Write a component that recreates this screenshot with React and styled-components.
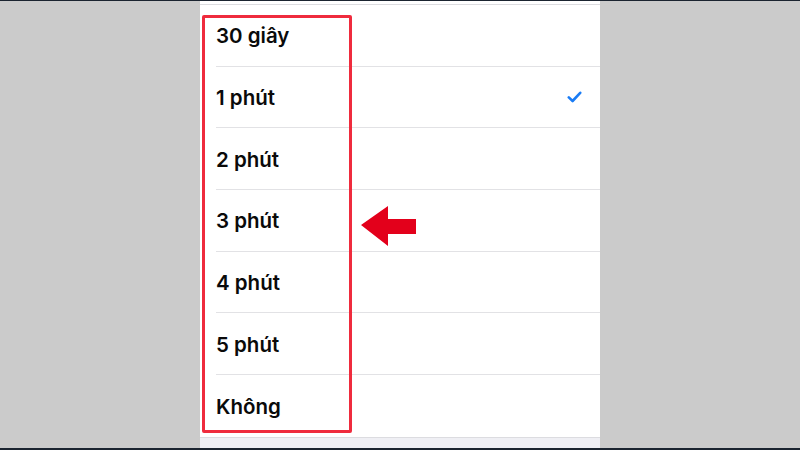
import React from "react";
import styled, { createGlobalStyle } from "styled-components";

const Global = createGlobalStyle`
  html, body { margin: 0; padding: 0; }
  body { width: 800px; height: 450px; overflow: hidden; background: #cbcbcb; font-family: Inter, "Noto Sans", sans-serif; }
`;

const Screen = styled.div`
  width: 800px;
  height: 450px;
  display: flex;
  flex-direction: column;
  background: #cbcbcb;
`;

const EdgeBar = styled.div`
  height: ${(p) => p.$h}px;
  background: #1b2430;
  flex: none;
`;

const Middle = styled.div`
  flex: 1;
  display: flex;
  justify-content: center;
`;

const Panel = styled.div`
  position: relative;
  width: 400px;
  background: #efeff4;
  display: flex;
  flex-direction: column;
`;

const TopGap = styled.div`
  height: 3px;
  background: #ffffff;
  border-bottom: 1px solid #dcdce0;
`;

const List = styled.div`
  background: #ffffff;
  border-bottom: 1px solid #dcdce0;
`;

const Row = styled.div`
  height: 61.7px;
  display: flex;
  align-items: center;
  padding-left: 16px;
`;

const RowInner = styled.div`
  flex: 1;
  height: 100%;
  display: flex;
  align-items: center;
  justify-content: space-between;
  padding-right: 18px;
  box-sizing: border-box;
  border-bottom: ${(p) => (p.$last ? "none" : "1px solid #e2e2e5")};
`;

const Label = styled.span`
  font-size: 20.5px;
  font-weight: 600;
  color: #0a0a0a;
  letter-spacing: 0;
  padding-top: 1px;
`;

const Highlight = styled.div`
  position: absolute;
  left: 2px;
  top: 14px;
  width: 150px;
  height: 418px;
  box-sizing: border-box;
  border: 3px solid #ef2b3d;
  border-radius: 2px;
`;

const Arrow = styled.svg`
  position: absolute;
  left: 160px;
  top: 203px;
`;

const items = ["30 giây", "1 phút", "2 phút", "3 phút", "4 phút", "5 phút", "Không"];

export default function App() {
  return (
    <>
      <Global />
      <Screen>
        <EdgeBar $h={1} />
        <Middle>
          <Panel>
            <TopGap />
            <List>
              {items.map((t, i) => (
                <Row key={t}>
                  <RowInner $last={i === items.length - 1}>
                    <Label>{t}</Label>
                    {i === 1 && (
                      <svg width="15" height="12" viewBox="0 0 15 12">
                        <path d="M1.8 6.4 L5.6 10 L13.2 1.8" fill="none" stroke="#1a7cf5" strokeWidth="2.6" strokeLinecap="round" strokeLinejoin="round" />
                      </svg>
                    )}
                  </RowInner>
                </Row>
              ))}
            </List>
            <Highlight />
            <Arrow width="60" height="44" viewBox="0 0 60 44">
              <path d="M1 21 L28 2 L28 15 L56 15 L56 30 L28 30 L28 42 Z" fill="#e3001b" />
            </Arrow>
          </Panel>
        </Middle>
        <EdgeBar $h={2} />
      </Screen>
    </>
  );
}
